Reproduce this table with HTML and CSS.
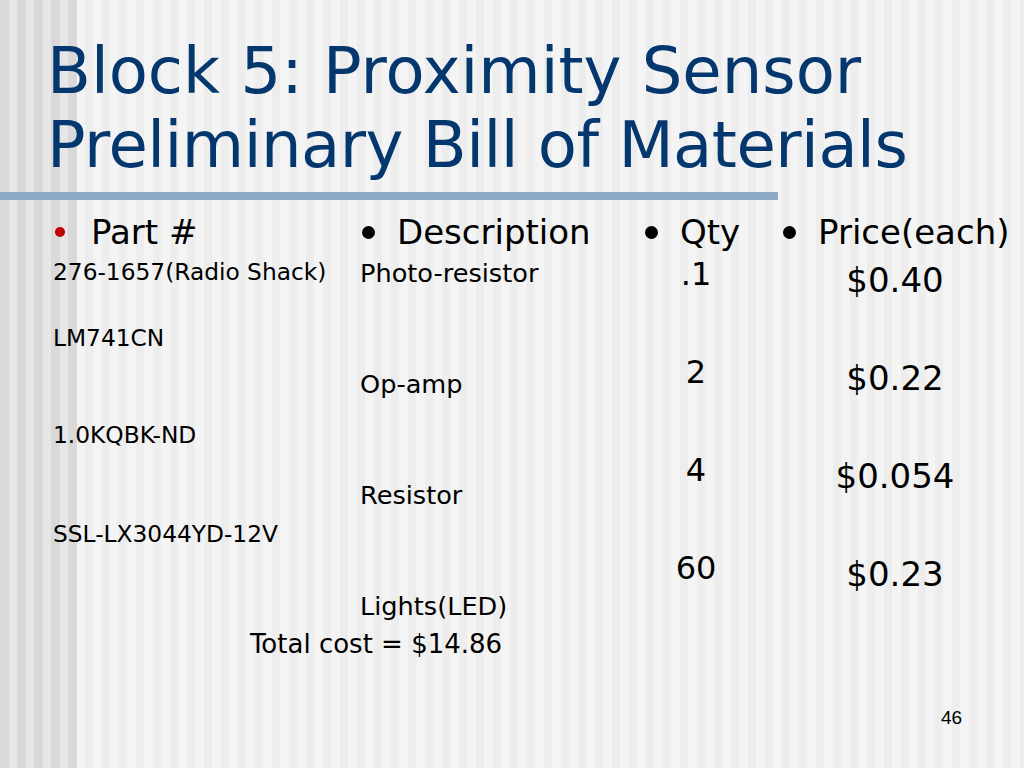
FILE: index.html
```html
<!DOCTYPE html>
<html>
<head>
<meta charset="utf-8">
<link rel="stylesheet" href="styles.css">
</head>
<body>
<div class="slide">
  <h1 class="title"><span class="tline">Block 5: Proximity Sensor</span><span class="tline tline-2">Preliminary Bill of Materials</span></h1>
  <div class="rule"></div>
  <div class="table">
    <div class="col col-part">
      <div class="head"><span class="dot dot-red"></span><span class="htext">Part #</span></div>
      <div class="item p1">276-1657(Radio Shack)</div>
      <div class="item p2">LM741CN</div>
      <div class="item p3">1.0KQBK-ND</div>
      <div class="item p4">SSL-LX3044YD-12V</div>
    </div>
    <div class="col col-desc">
      <div class="head"><span class="dot"></span><span class="htext">Description</span></div>
      <div class="item d1">Photo-resistor</div>
      <div class="item d2">Op-amp</div>
      <div class="item d2">Resistor</div>
      <div class="item d2">Lights(LED)</div>
    </div>
    <div class="col col-qty">
      <div class="head"><span class="dot"></span><span class="htext">Qty</span></div>
      <div class="num q1">.1</div>
      <div class="num q2">2</div>
      <div class="num q2">4</div>
      <div class="num q2">60</div>
    </div>
    <div class="col col-price">
      <div class="head"><span class="dot"></span><span class="htext">Price(each)</span></div>
      <div class="num pr1">$0.40</div>
      <div class="num pr2">$0.22</div>
      <div class="num pr2">$0.054</div>
      <div class="num pr2">$0.23</div>
    </div>
  </div>
  <div class="total">Total cost = $14.86</div>
  <div class="footer">46</div>
</div>
</body>
</html>
```
FILE: styles.css
```css
html, body {
  margin: 0;
  padding: 0;
}
body {
  width: 1024px;
  height: 768px;
  overflow: hidden;
}
.slide {
  width: 1024px;
  height: 768px;
  display: flex;
  flex-direction: column;
  font-family: "DejaVu Sans", Verdana, sans-serif;
  color: #000;
  background:
    repeating-linear-gradient(90deg, #d9d9d9 0 9px, #e6e6e6 9px 17px) 0 0 / 77px 100% no-repeat,
    repeating-linear-gradient(90deg, #ededed 0 8px, #f4f4f4 8px 17px);
}
.title {
  margin: 34px 0 0 47px;
  font-weight: normal;
  font-size: 64px;
  line-height: 74px;
  color: #04376e;
}
.tline {
  display: block;
  white-space: nowrap;
}
.tline-2 {
  letter-spacing: -0.5px;
}
.rule {
  margin-top: 10px;
  width: 778px;
  height: 8px;
  background: #8eaac8;
}
.table {
  display: grid;
  grid-template-columns: 307px 283px 138px 240px;
  padding-left: 53px;
  margin-top: 12px;
}
.col {
  display: flex;
  flex-direction: column;
}
.head {
  display: flex;
  align-items: center;
  height: 40px;
  font-size: 34px;
  white-space: nowrap;
  padding-left: 2px;
}
.dot {
  width: 13px;
  height: 13px;
  border-radius: 50%;
  background: #000;
  margin-right: 22px;
  flex: none;
}
.dot-red {
  width: 10px;
  height: 10px;
  background: #c00000;
  margin-right: 26px;
}
.item {
  line-height: 32px;
  white-space: nowrap;
}
.col-part .item {
  font-size: 23.3px;
}
.col-desc .item {
  font-size: 25.6px;
}
.p1 { margin-top: 4px; }
.p2 { margin-top: 34px; }
.p3 { margin-top: 65px; }
.p4 { margin-top: 67px; }
.d1 { margin-top: 5px; }
.d2 { margin-top: 79px; }
.num {
  line-height: 40px;
  text-align: center;
}
.col-qty .num {
  font-size: 32px;
  width: 106px;
}
.q1 { margin-top: 2px; }
.q2 { margin-top: 58px; }
.col-price .num {
  font-size: 34px;
  width: 228px;
}
.pr1 { margin-top: 8px; }
.pr2 { margin-top: 58px; }
.total {
  width: 752px;
  text-align: center;
  font-size: 26px;
  line-height: 34px;
  margin-top: 5px;
}
.footer {
  margin-top: auto;
  margin-bottom: 39px;
  padding-left: 941px;
  font-family: "Liberation Sans", Arial, sans-serif;
  font-size: 19px;
  line-height: 22px;
}
```
